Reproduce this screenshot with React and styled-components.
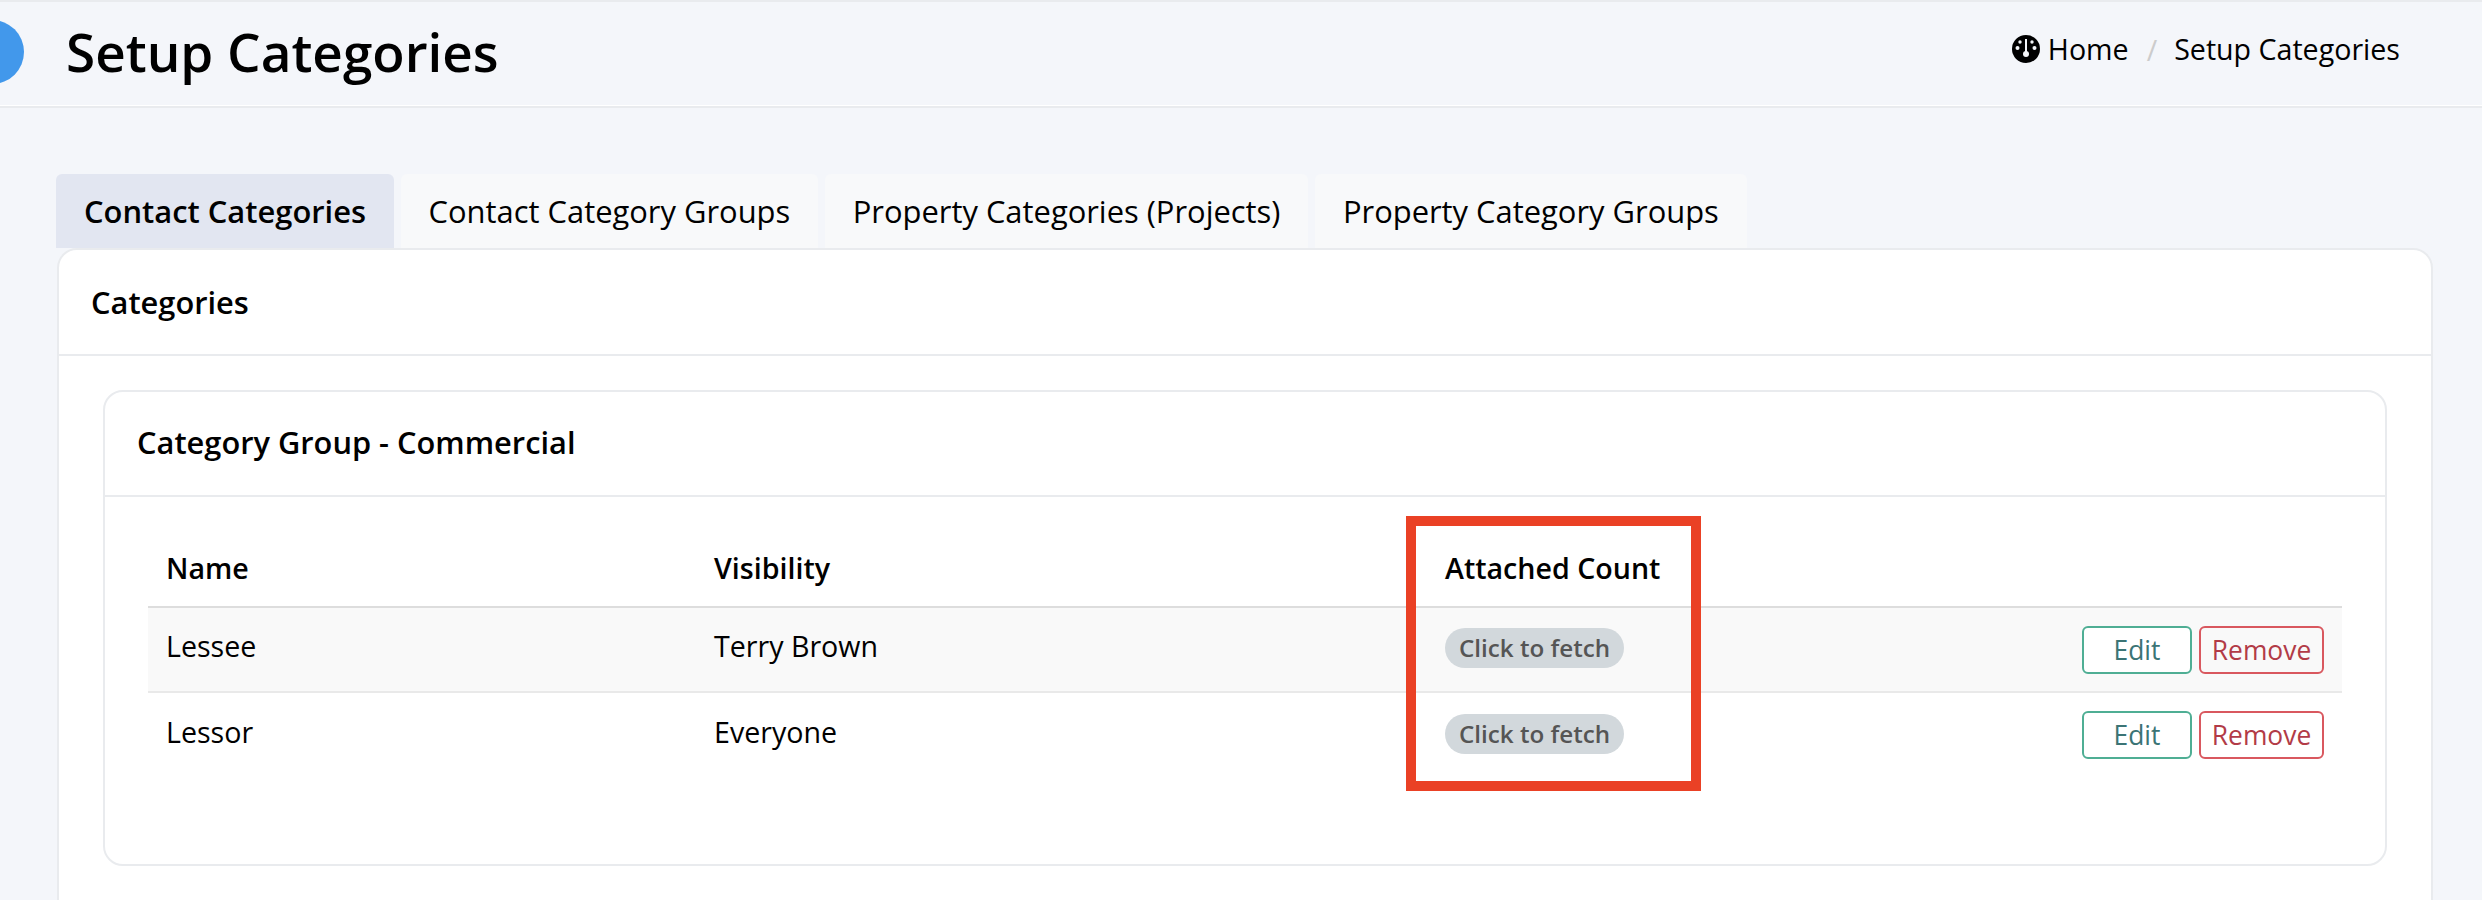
import styled, { createGlobalStyle } from "styled-components";

const GlobalStyle = createGlobalStyle`
  html, body {
    margin: 0;
    padding: 0;
    height: 900px;
    overflow: hidden;
    background: #f4f6fa;
    font-family: "Open Sans", "Liberation Sans", sans-serif;
    color: #000;
  }
`;

const tabs = [
  "Contact Categories",
  "Contact Category Groups",
  "Property Categories (Projects)",
  "Property Category Groups",
];

const rows = [
  { name: "Lessee", visibility: "Terry Brown" },
  { name: "Lessor", visibility: "Everyone" },
];

const GaugeIcon = () => (
  <svg width="28" height="28" viewBox="0 0 28 28" aria-hidden="true">
    <circle cx="14" cy="14" r="14" fill="#000" />
    <circle cx="5.5" cy="13" r="2" fill="#f4f6fa" />
    <circle cx="22.5" cy="13" r="2" fill="#f4f6fa" />
    <circle cx="8" cy="7" r="1.7" fill="#f4f6fa" />
    <circle cx="20" cy="7" r="1.7" fill="#f4f6fa" />
    <rect x="13" y="4" width="2" height="14" fill="#f4f6fa" />
    <circle cx="14" cy="19" r="3" fill="#f4f6fa" />
  </svg>
);

const App = () => {
  return (
    <Page>
      <GlobalStyle />
      <Header>
        <Avatar />
        <Title>Setup Categories</Title>
        <Breadcrumb>
          <GaugeIcon />
          <Crumb>Home</Crumb>
          <Slash>/</Slash>
          <Crumb>Setup Categories</Crumb>
        </Breadcrumb>
      </Header>
      <Main>
        <Tabs>
          {tabs.map((tab, i) => (
            <Tab key={tab} $active={i === 0}>
              {tab}
            </Tab>
          ))}
        </Tabs>
        <Card>
          <CardTitle>Categories</CardTitle>
          <CardBody>
            <GroupCard>
              <GroupTitle>Category Group - Commercial</GroupTitle>
              <GroupBody>
                <Table>
                  <colgroup>
                    <col width="548" />
                    <col width="731" />
                    <col width="400" />
                    <col />
                  </colgroup>
                  <thead>
                    <tr>
                      <Th>Name</Th>
                      <Th>Visibility</Th>
                      <Th>Attached Count</Th>
                      <Th />
                    </tr>
                  </thead>
                  <tbody>
                    {rows.map((row, i) => (
                      <Row key={row.name} $striped={i === 0}>
                        <Td>{row.name}</Td>
                        <Td>{row.visibility}</Td>
                        <BadgeCell>
                          <Badge>Click to fetch</Badge>
                        </BadgeCell>
                        <ActionCell>
                          <EditButton>Edit</EditButton>
                          <RemoveButton>Remove</RemoveButton>
                        </ActionCell>
                      </Row>
                    ))}
                  </tbody>
                </Table>
              </GroupBody>
            </GroupCard>
          </CardBody>
        </Card>
      </Main>
      <Highlight />
    </Page>
  );
};

export default App;

const Page = styled.div`
  position: relative;
  width: 2482px;
  height: 900px;
  overflow: hidden;
  background: #f4f6fa;
`;

const Header = styled.header`
  display: flex;
  align-items: center;
  box-sizing: border-box;
  height: 108px;
  padding: 0 82px 4px 0;
  border-top: 2px solid #e9ebee;
  border-bottom: 2px solid #e9ebee;
  box-shadow: inset 0 -1px 0 #fff;
`;

const Avatar = styled.div`
  flex: none;
  width: 64px;
  height: 64px;
  margin-left: -40px;
  margin-right: 42px;
  border-radius: 50%;
  background: #4298eb;
`;

const Title = styled.h1`
  flex: 1;
  margin: 0;
  font-size: 53px;
  font-weight: 600;
  line-height: 1.2;
`;

const Breadcrumb = styled.nav`
  display: flex;
  align-items: center;
  gap: 8px;
  margin-bottom: 6px;
  font-size: 28.6px;
`;

const Crumb = styled.span`
  line-height: 1.4;
`;

const Slash = styled.span`
  margin: 0 9px 0 10px;
  color: #ccc;
`;

const Main = styled.main`
  padding: 66px 49px 0 56px;
`;

const Tabs = styled.div`
  display: flex;
  gap: 6.5px;
`;

const Tab = styled.div`
  box-sizing: border-box;
  height: 74px;
  padding: 0 28px;
  display: flex;
  align-items: center;
  border-radius: 6px 6px 0 0;
  font-size: 30.9px;
  font-weight: ${(props) => (props.$active ? 600 : 400)};
  background: ${(props) => (props.$active ? "#e2e6f1" : "#f8f9fa")};
`;

const Card = styled.section`
  box-sizing: border-box;
  height: 700px;
  margin-left: 1px;
  background: #fff;
  border: 2px solid #e9ebee;
  border-radius: 20px;
`;

const CardTitle = styled.div`
  box-sizing: border-box;
  height: 106px;
  padding-left: 32px;
  display: flex;
  align-items: center;
  border-bottom: 2px solid #e9ebee;
  font-size: 30.8px;
  font-weight: 600;
`;

const CardBody = styled.div`
  padding: 34px 44px;
`;

const GroupCard = styled.div`
  box-sizing: border-box;
  height: 476px;
  border: 2px solid #e9ebee;
  border-radius: 20px;
`;

const GroupTitle = styled.div`
  box-sizing: border-box;
  height: 105px;
  padding: 0 0 4px 32px;
  display: flex;
  align-items: center;
  border-bottom: 2px solid #e9ebee;
  font-size: 30.8px;
  font-weight: 600;
`;

const GroupBody = styled.div`
  padding: 23px 43px 0;
`;

const Table = styled.table`
  width: 100%;
  table-layout: fixed;
  border-collapse: collapse;
`;

const Th = styled.th`
  box-sizing: border-box;
  height: 87px;
  padding: 9px 0 0 18px;
  border-bottom: 2px solid #ddd;
  text-align: left;
  font-size: 28.6px;
  font-weight: 600;
`;

const Row = styled.tr`
  background: ${(props) => (props.$striped ? "#f9f9f9" : "#fff")};
  border-bottom: ${(props) => (props.$striped ? "2px solid #e9e9e9" : "none")};
`;

const Td = styled.td`
  box-sizing: border-box;
  height: 85px;
  padding: 0 0 8px 18px;
  font-size: 28.6px;
  vertical-align: middle;
`;

const BadgeCell = styled(Td)`
  padding-bottom: 5px;
`;

const ActionCell = styled.td`
  padding: 0 18px 0 0;
  text-align: right;
  white-space: nowrap;
`;

const Badge = styled.span`
  display: inline-block;
  box-sizing: border-box;
  height: 40px;
  padding: 0 14px;
  border-radius: 20px;
  background: #d2d8dc;
  color: #555;
  font-size: 24.2px;
  font-weight: 600;
  line-height: 40px;
`;

const ActionButton = styled.button`
  box-sizing: border-box;
  height: 48px;
  padding: 0;
  border-radius: 6px;
  border: 2px solid;
  font-family: inherit;
  font-size: 26.4px;
  vertical-align: middle;
`;

const EditButton = styled(ActionButton)`
  width: 110px;
  margin-right: 7px;
  background: #fff;
  border-color: #4fae94;
  color: #3b7475;
`;

const RemoveButton = styled(ActionButton)`
  width: 125px;
  background: transparent;
  border-color: #d9585f;
  color: #b23b47;
`;

// red annotation drawn over the screenshot
const Highlight = styled.div`
  position: absolute;
  left: 1406px;
  top: 516px;
  width: 295px;
  height: 275px;
  box-sizing: border-box;
  border: 10px solid #ea4125;
  pointer-events: none;
`;
